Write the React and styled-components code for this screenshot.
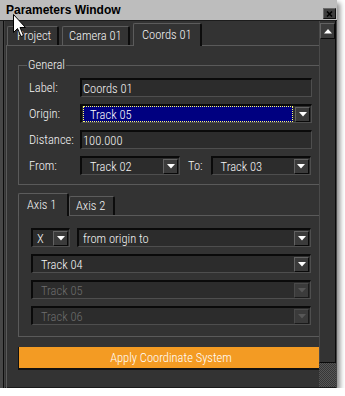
import React from 'react';
import styled, { createGlobalStyle } from 'styled-components';

const FONT = `Roboto, 'Liberation Sans', Arial, sans-serif`;

const GlobalStyle = createGlobalStyle`
  html, body { margin: 0; padding: 0; background: #ffffff; }
  body { font-family: ${FONT}; font-size: 12.5px; font-stretch: 75%; font-weight: 300; }
  * { box-sizing: border-box; }
`;

const Window = styled.div`
  position: relative;
  width: 337px;
  height: 388px;
  display: flex;
  flex-direction: column;
  background: #333333;
  box-shadow: 3px 3px 5px rgba(0, 0, 0, 0.45);
`;

const TitleBar = styled.div`
  flex: none;
  height: 21px;
  display: flex;
  align-items: flex-start;
  justify-content: space-between;
  padding: 0 1px 0 6px;
  background: #bdbdbd;
  border-bottom: 1px solid #1c1c1c;
`;

const Title = styled.span`
  font-family: 'Liberation Sans', Arial, sans-serif;
  font-stretch: 100%;
  font-weight: bold;
  font-size: 12px;
  line-height: 20px;
  color: #000;
`;

const CloseButton = styled.div`
  width: 13px;
  height: 11px;
  margin-top: 8px;
  background: #3e3e3e;
  border: 1px solid;
  border-color: #6a6a6a #0e0e0e #0e0e0e #6a6a6a;
  display: flex;
  align-items: center;
  justify-content: center;
`;

const Body = styled.div`
  flex: 1;
  min-height: 0;
  display: flex;
  padding: 0 1px 0 5px;
  box-shadow: inset 3px 0 0 #474747, inset 4px 0 0 #0d0d0d, inset 5px 0 0 #404040,
    inset -1px 0 0 #474747, inset 0 -1px 0 #1a1a1a;
`;

const Viewport = styled.div`
  flex: 1;
  min-width: 0;
  overflow: hidden;
  padding-top: 2px;
`;

const Sheet = styled.div`
  margin-left: 1px;
  width: 330px;
`;

const TabStrip = styled.div`
  display: flex;
  align-items: flex-end;
  height: 22px;
  padding-left: ${p => p.$indent || 0}px;
`;

const Tab = styled.div`
  position: relative;
  z-index: ${p => (p.$active ? 2 : 1)};
  width: ${p => p.$w}px;
  height: ${p => (p.$active ? 23 : 19)}px;
  margin-bottom: ${p => (p.$active ? -1 : 0)}px;
  margin-right: ${p => p.$gap || 0}px;
  padding-left: ${p => p.$pad}px;
  padding-top: ${p => (p.$active ? 3 : 1)}px;
  background: #333333;
  border-style: solid;
  border-width: 1px 2px 0 1px;
  border-color: #5c5c5c #0c0c0c #5c5c5c #5c5c5c;
  border-radius: 2px 2px 0 0;
  color: #f6f6f6;
  line-height: 15px;
  white-space: nowrap;
`;

const TabPanel = styled.div`
  border-top: 1px solid #5a5a5a;
  border-left: 1px solid #5a5a5a;
  padding: 12px 0 30px 11px;
`;

const GroupBox = styled.fieldset`
  margin: 0;
  width: 312px;
  min-width: 0;
  padding: 0 17px 9px 10px;
  border: 1px solid #5a5a5a;
`;

const Legend = styled.legend`
  margin-left: -2px;
  padding: 0 1px;
  color: #f6f6f6;
  line-height: 14px;
`;

const FormGrid = styled.div`
  margin-top: 6px;
  display: grid;
  grid-template-columns: 51px 1fr;
  row-gap: 7px;
  align-items: center;
`;

const FieldLabel = styled.span`
  color: #f6f6f6;
  white-space: nowrap;
  margin: ${p => p.$margin || '0'};
`;

const Sunken = styled.div`
  height: 19px;
  display: flex;
  align-items: center;
  border-style: solid;
  border-width: 2px 1px 1px 2px;
  border-color: #0a0a0a #4e4e4e #4e4e4e #0a0a0a;
  background: #2c2c2c;
  width: ${p => (p.$w ? `${p.$w}px` : 'auto')};
  flex: ${p => (p.$grow ? '1 1 0' : 'none')};
  padding-right: 1px;
  color: ${p => (p.$disabled ? '#6e6e6e' : '#f6f6f6')};
  white-space: nowrap;
`;

const InputText = styled.span`
  padding-left: 1px;
`;

const SelectText = styled.span`
  flex: 1;
  padding-left: ${p => p.$pad}px;
  overflow: hidden;
`;

const FocusHighlight = styled.span`
  flex: 1;
  align-self: stretch;
  margin: 0 2px 0 1px;
  padding-left: 6px;
  background: #000080;
  border: 1px dotted #ffff66;
  color: #ffffff;
  display: flex;
  align-items: center;
`;

const DropButton = styled.div`
  flex: none;
  width: 15px;
  height: 15px;
  display: flex;
  align-items: center;
  justify-content: center;
  background: #3b3b3b;
  border: 1px solid;
  border-color: ${p => (p.$disabled ? '#4a4a4a #1a1a1a #1a1a1a #4a4a4a' : '#626262 #0a0a0a #0a0a0a #626262')};
`;

const InlineRow = styled.div`
  display: flex;
  align-items: center;
`;

const AxisSection = styled.div`
  margin-top: 8px;
`;

const AxisPanel = styled.div`
  width: 312px;
  border-top: 1px solid #5a5a5a;
  border-left: 1px solid #5a5a5a;
  border-bottom: 1px solid #5a5a5a;
  padding: 12px 19px 11px 12px;
  display: flex;
  flex-direction: column;
  gap: 7px;
`;

const AxisRow = styled.div`
  display: flex;
  gap: 7px;
`;

const ApplyButton = styled.div`
  margin-top: 10px;
  width: 305px;
  height: 23px;
  background: #f39b23;
  border-style: solid;
  border-width: 0 0 2px 1px;
  border-color: #111111;
  color: #ffffff;
  display: flex;
  align-items: center;
  justify-content: center;
`;

const ScrollColumn = styled.div`
  flex: none;
  width: 17px;
  display: flex;
  flex-direction: column;
`;

const ScrollTrack = styled.div`
  flex: 1;
  padding-top: 2px;
  border-left: 1px solid #4a4a4a;
  border-right: 1px solid #0a0a0a;
  border-bottom: 1px solid #0a0a0a;
  background: #333333;
`;

const ScrollButton = styled.div`
  width: 15px;
  height: 16px;
  display: flex;
  align-items: center;
  justify-content: center;
  background: #3b3b3b;
  border: 1px solid;
  border-color: #626262 #0a0a0a #0a0a0a #626262;
`;

const Grip = styled.div`
  flex: none;
  height: 24px;
  margin-bottom: 1px;
  background: repeating-conic-gradient(#565656 0 25%, #363636 0 50%) 0 0 / 2px 2px;
`;

const Cursor = styled.svg`
  position: absolute;
  left: 12px;
  top: 13px;
  z-index: 10;
`;

const Arrow = ({ disabled }) => (
  <svg width="8" height="5" viewBox="0 0 8 5">
    <polygon points="0,0 8,0 4,4.5" fill={disabled ? '#575757' : '#ffffff'} />
  </svg>
);

const UpArrow = () => (
  <svg width="8" height="5" viewBox="0 0 8 5">
    <polygon points="0,4.5 8,4.5 4,0" fill="#ffffff" />
  </svg>
);

const Select = ({ text, w, grow, pad = 8, disabled }) => (
  <Sunken $w={w} $grow={grow} $disabled={disabled}>
    <SelectText $pad={pad}>{text}</SelectText>
    <DropButton $disabled={disabled}>
      <Arrow disabled={disabled} />
    </DropButton>
  </Sunken>
);

export default function App() {
  return (
    <>
      <GlobalStyle />
      <Window>
        <TitleBar>
          <Title>Parameters Window</Title>
          <CloseButton>
            <svg width="7" height="6" viewBox="0 0 7 6">
              <path d="M1 0.5 L6 5.5 M6 0.5 L1 5.5" stroke="#000" strokeWidth="1.6" />
            </svg>
          </CloseButton>
        </TitleBar>
        <Body>
          <Viewport>
            <Sheet>
              <TabStrip $indent={1}>
                <Tab $w={52} $pad={9} $gap={3}>Project</Tab>
                <Tab $w={68} $pad={6} $gap={3}>Camera 01</Tab>
                <Tab $w={69} $pad={8} $active>Coords 01</Tab>
              </TabStrip>
              <TabPanel>
                <GroupBox>
                  <Legend>General</Legend>
                  <FormGrid>
                    <FieldLabel>Label:</FieldLabel>
                    <Sunken>
                      <InputText>Coords 01</InputText>
                    </Sunken>
                    <FieldLabel>Origin:</FieldLabel>
                    <Sunken>
                      <FocusHighlight>Track 05</FocusHighlight>
                      <DropButton>
                        <Arrow />
                      </DropButton>
                    </Sunken>
                    <FieldLabel>Distance:</FieldLabel>
                    <Sunken>
                      <InputText>100.000</InputText>
                    </Sunken>
                    <FieldLabel>From:</FieldLabel>
                    <InlineRow>
                      <Select text="Track 02" w={100} />
                      <FieldLabel $margin="0 8px">To:</FieldLabel>
                      <Select text="Track 03" w={100} />
                    </InlineRow>
                  </FormGrid>
                </GroupBox>
                <AxisSection>
                  <TabStrip>
                    <Tab $w={51} $pad={8} $active>Axis 1</Tab>
                    <Tab $w={46} $pad={6}>Axis 2</Tab>
                  </TabStrip>
                  <AxisPanel>
                    <AxisRow>
                      <Select text="X" w={39} pad={4} />
                      <Select text="from origin to" grow pad={4} />
                    </AxisRow>
                    <Select text="Track 04" />
                    <Select text="Track 05" disabled />
                    <Select text="Track 06" disabled />
                  </AxisPanel>
                </AxisSection>
                <ApplyButton>Apply Coordinate System</ApplyButton>
              </TabPanel>
            </Sheet>
          </Viewport>
          <ScrollColumn>
            <ScrollTrack>
              <ScrollButton>
                <UpArrow />
              </ScrollButton>
            </ScrollTrack>
            <Grip />
          </ScrollColumn>
        </Body>
        <Cursor width="15" height="26" viewBox="0 0 15 26">
          <path
            d="M1.5 1.5 L1.5 19.5 L5.5 15.5 L9 23.5 L11.5 22.5 L8 14.5 L13.5 14.5 Z"
            fill="#ffffff"
            stroke="#000000"
            strokeWidth="1"
            strokeLinejoin="miter"
          />
        </Cursor>
      </Window>
    </>
  );
}
